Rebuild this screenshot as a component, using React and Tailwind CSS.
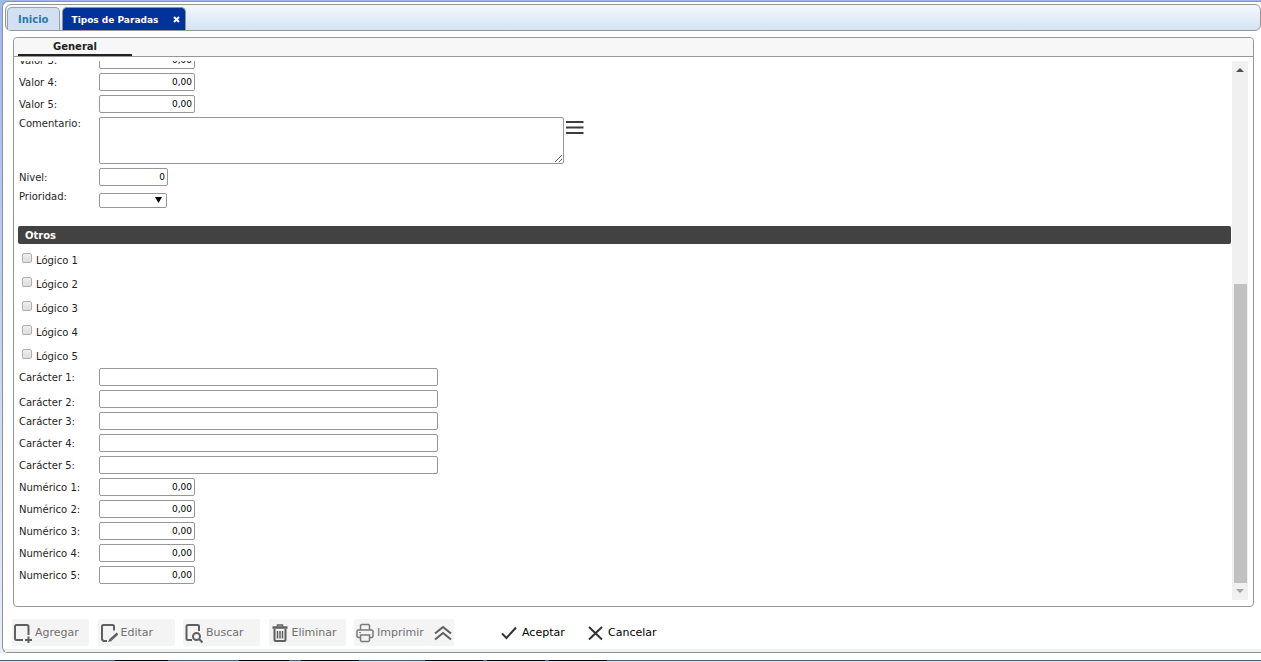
import { useState } from "react";
import clsx from "clsx";

const logicos = ["Lógico 1", "Lógico 2", "Lógico 3", "Lógico 4", "Lógico 5"];
const numericos = ["Numérico 1:", "Numérico 2:", "Numérico 3:", "Numérico 4:", "Numerico 5:"];
const caracteres = ["Carácter 1:", "Carácter 2:", "Carácter 3:", "Carácter 4:", "Carácter 5:"];

const inputClass =
  "h-[18px] rounded-[2px] border border-[#979797] bg-white px-[2px] text-[9px] text-black outline-none focus:border-[#003399]";

function Row({ id, label, align = "items-center", children }) {
  return (
    <div className={clsx("flex min-h-[22px] shrink-0", align)}>
      <label htmlFor={id} className="mt-px -mb-px w-[81px] shrink-0 pl-px leading-4">
        {label}
      </label>
      {children}
    </div>
  );
}

function NumberRow({ id, label, initial = "0,00", width = "w-24" }) {
  const [value, setValue] = useState(initial);
  return (
    <Row id={id} label={label}>
      <input
        id={id}
        type="text"
        className={clsx(inputClass, width, "text-right")}
        value={value}
        onChange={(e) => setValue(e.target.value)}
      />
    </Row>
  );
}

function ToolButton({ label, icon, disabled }) {
  return (
    <button
      type="button"
      disabled={disabled}
      className={clsx(
        "flex h-[27px] min-w-[77px] items-center gap-[3px] rounded-[2px] pl-[2px]",
        disabled ? "bg-[#f4f4f4] text-[#707070]" : "text-black"
      )}
    >
      {icon}
      <span className="pt-px">{label}</span>
    </button>
  );
}

function Icon({ children, color = "#5f5f5f" }) {
  return (
    <svg width="18" height="20" viewBox="0 0 18 20" fill="none" stroke={color} strokeWidth="2" className="shrink-0">
      {children}
    </svg>
  );
}

const AddIcon = (
  <Icon>
    <path d="M9 17H2.500Q1 17 1 15.500V3.500Q1 2 2.500 2H13Q14.500 2 14.500 3.500V12" />
    <path d="M14.500 13.500V20M11 17H18" />
  </Icon>
);

const EditIcon = (
  <Icon>
    <path d="M7 18H3.500L2 16.500V3.500Q2 2 3.500 2H12.500Q14 2 14 3.500V7.500" />
    <path d="M17.500 10.500L11 16.500" strokeWidth="2.500" />
    <path d="M10 15L8 19L12 18Z" fill="#5f5f5f" stroke="none" />
  </Icon>
);

const SearchIcon = (
  <Icon>
    <path d="M7 17H3Q1.500 17 1.500 15.500V3.500Q1.500 2 3 2H12.500Q14 2 14 3.500V8" />
    <circle cx="11.500" cy="13.500" r="3.500" />
    <path d="M14 16L17.500 19.500" />
  </Icon>
);

const TrashIcon = (
  <Icon>
    <path d="M6.500 3.500V2H11.500V3.500" strokeWidth="1.500" />
    <path d="M1.500 4.500H16.500" strokeWidth="2.500" />
    <path d="M3.500 6V17Q3.500 18 4.500 18H13.500Q14.500 18 14.500 17V6" />
    <path d="M6.500 8V15.500M9 8V15.500M11.500 8V15.500" strokeWidth="1.500" />
  </Icon>
);

const PrintIcon = (
  <Icon color="#7a7a7a">
    <path d="M4.500 7V2.500L5.500 1.500H12.500L13.500 2.500V7" strokeWidth="1.500" />
    <path d="M4 14.500H2L1 13.500V8L2 7H16L17 8V13.500L16 14.500H14" strokeWidth="1.500" />
    <path d="M4.500 12H13.500V17.500L12.500 18.500H5.500L4.500 17.500Z" strokeWidth="1.500" />
    <path d="M3 9.500H5" strokeWidth="1" />
  </Icon>
);

const CheckIcon = (
  <Icon color="#333333">
    <path d="M1 10.500L5.500 15L15 4.500" />
  </Icon>
);

const CloseIcon = (
  <Icon color="#333333">
    <path d="M2 4L15 16.500M15 4L2 16.500" />
  </Icon>
);

function Scrollbar() {
  return (
    <div className="flex w-4 shrink-0 flex-col items-center bg-[#f0f0f0]">
      <svg width="8" height="17" viewBox="0 0 8 17" className="shrink-0">
        <path d="M0 11L4 7L8 11Z" fill="#505050" />
      </svg>
      <div className="grow-[206]" />
      <div className="w-[13px] grow-[299] bg-[#c1c1c1]" />
      <svg width="8" height="17" viewBox="0 0 8 17" className="shrink-0">
        <path d="M0 6L4 10L8 6Z" fill="#a3a3a3" />
      </svg>
    </div>
  );
}

function FormContent() {
  return (
    <div className="flex shrink-0 flex-col pb-[14px]">
      <NumberRow id="valor3" label="Valor 3:" />
      <NumberRow id="valor4" label="Valor 4:" />
      <NumberRow id="valor5" label="Valor 5:" />
      <Row id="comentario" label="Comentario:" align="items-start">
        <textarea
          id="comentario"
          className="my-[2px] block h-[47px] w-[465px] resize rounded-[2px] border border-[#979797] bg-white outline-none"
        />
        <button type="button" aria-label="Ampliar comentario" className="mt-1 ml-0.5">
          <svg width="18" height="18" viewBox="0 0 18 18" stroke="#3c3c3c" strokeWidth="2">
            <path d="M0 3H17.500M0 8.500H17.500M0 14H17.500" />
          </svg>
        </button>
      </Row>
      <NumberRow id="nivel" label="Nivel:" initial="0" width="w-[69px]" />
      <Row id="prioridad" label="Prioridad:" align="items-start">
        <div className="relative mt-[5px]">
          <select
            id="prioridad"
            className="block h-[15px] w-[68px] appearance-none rounded-[2px] border border-[#979797] bg-white text-[9px] outline-none"
          >
            <option value=""></option>
          </select>
          <svg width="7" height="6" viewBox="0 0 7 6" className="pointer-events-none absolute top-1 right-[5px]">
            <path d="M0 0H7L3.500 6Z" fill="#000000" />
          </svg>
        </div>
      </Row>
      <h2 className="mt-4 mb-0.5 h-[18px] rounded-[2px] bg-[#424242] px-[7px] font-bold leading-5 text-white">
        Otros
      </h2>
      {logicos.map((label) => (
        <label key={label} className="flex h-6 items-center gap-1 pl-1">
          <input
            type="checkbox"
            className="h-[10px] w-[10px] appearance-none rounded-[2px] border border-[#b0b0b0] bg-linear-to-b from-[#eeeeee] to-[#dcdcdc] checked:bg-[#003399]"
          />
          <span className="pt-1.5">{label}</span>
        </label>
      ))}
      {caracteres.map((label, i) => (
        <Row key={label} id={`caracter${i}`} label={label} align={i === 1 ? "items-end" : "items-center"}>
          <input id={`caracter${i}`} type="text" className={clsx(inputClass, "w-[339px] self-center")} />
        </Row>
      ))}
      {numericos.map((label, i) => (
        <NumberRow key={label} id={`numerico${i}`} label={label} />
      ))}
    </div>
  );
}

// Top edge of the window list that sits under the panel
function BottomStrip() {
  return (
    <div className="mt-[7px] shrink-0 border-b border-[#d5e3f5]">
      <div className="flex h-px bg-[#4a5b78]">
        <div className="ml-[115px] w-[53px] bg-black" />
        <div className="ml-[71px] w-[50px] bg-black" />
        <div className="ml-3 w-[58px] bg-black" />
        <div className="ml-[66px] w-[58px] bg-black" />
        <div className="ml-1 w-[58px] bg-black" />
        <div className="ml-1 w-[58px] bg-black" />
      </div>
    </div>
  );
}

function App() {
  return (
    <div className="flex h-screen flex-col overflow-hidden bg-white font-['Verdana','DejaVu_Sans',sans-serif] text-[10px] leading-4 text-[#1e1e1e]">
      <div className="flex min-h-0 flex-1 flex-col bg-linear-to-b from-[#9db8ec] to-[#e8eef8] pt-px pl-[2px]">
        <div className="flex min-h-0 flex-1 flex-col rounded-l-[6px] border-y border-l border-[#919191] bg-white pt-[2px] pl-[2px]">
          <nav className="flex h-[27px] shrink-0 items-end gap-[2px] rounded-[6px] border border-[#979797] bg-linear-to-b from-[#f3f7fd] to-[#d5e3f5] pl-px text-[9px] font-bold">
            <a
              href="#inicio"
              className="flex h-[23px] min-w-[52px] items-center justify-center rounded-t-[5px] border border-b-0 border-[#a0a0a0] bg-[#d3e0f2] px-[10px] pt-px text-[10px] text-[#2779aa]"
            >
              Inicio
            </a>
            <div className="flex h-[23px] min-w-[124px] items-center justify-between rounded-t-[5px] border border-b-0 border-[#8f959f] bg-[#003399] px-[5px] pt-px pl-[9px] text-white">
              <a href="#tipos">Tipos de Paradas</a>
              <button type="button" aria-label="Cerrar">
                <svg width="7" height="7" viewBox="0 0 7 7" stroke="#ffffff" strokeWidth="2">
                  <path d="M1 1L6 6M6 1L1 6" />
                </svg>
              </button>
            </div>
          </nav>
          <main className="mt-[6px] mr-[7px] ml-2 flex min-h-0 flex-1 flex-col rounded-[4px] border border-[#979797]">
            <div className="flex h-[19px] shrink-0 items-end rounded-t-[4px] border-b border-[#979797] bg-[#f7f7f7] pl-1">
              <button
                type="button"
                className="h-[18px] w-[114px] border-b-2 border-[#222222] pt-px font-bold leading-4 text-[#222222]"
              >
                General
              </button>
            </div>
            <div className="mt-1 mr-[5px] mb-[6px] flex min-h-0 flex-1">
              <div className="flex min-w-0 flex-1 flex-col justify-end overflow-hidden pr-px pl-1">
                <FormContent />
              </div>
              <Scrollbar />
            </div>
          </main>
          <footer className="flex shrink-0 border-b-[3px] border-[#eef1f4] px-[7px] pt-3 pb-[3px] text-[11px]">
            <div className="flex w-[442px] justify-between">
              <ToolButton label="Agregar" icon={AddIcon} disabled />
              <ToolButton label="Editar" icon={EditIcon} disabled />
              <ToolButton label="Buscar" icon={SearchIcon} disabled />
              <ToolButton label="Eliminar" icon={TrashIcon} disabled />
              <div className="flex">
                <ToolButton label="Imprimir" icon={PrintIcon} disabled />
                <button
                  type="button"
                  disabled
                  aria-label="Más opciones"
                  className="flex w-[23px] items-center justify-center bg-[#f4f4f4]"
                >
                  <svg width="18" height="16" viewBox="0 0 18 16" fill="none" stroke="#5f5f5f" strokeWidth="2">
                    <path d="M1 8.500L9 2L17 8.500M1 14.500L9 8L17 14.500" />
                  </svg>
                </button>
              </div>
            </div>
            <div className="ml-[45px] flex gap-[9px]">
              <ToolButton label="Aceptar" icon={CheckIcon} />
              <ToolButton label="Cancelar" icon={CloseIcon} />
            </div>
          </footer>
        </div>
      </div>
      <BottomStrip />
    </div>
  );
}

export default App;
